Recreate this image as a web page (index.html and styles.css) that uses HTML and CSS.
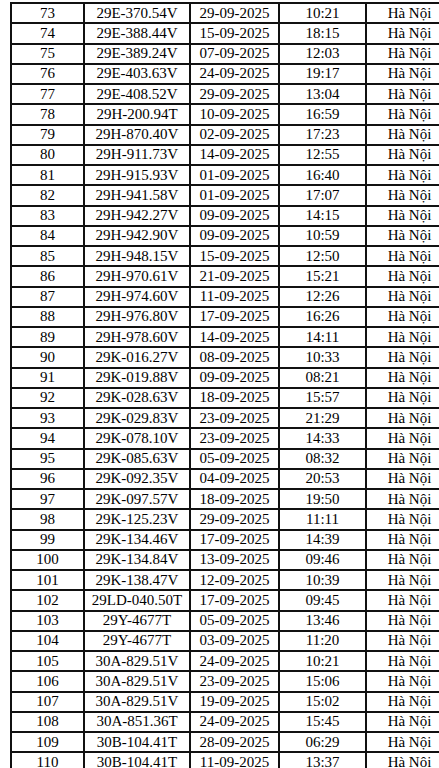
FILE: index.html
```html
<!DOCTYPE html>
<html lang="vi">
<head>
<meta charset="utf-8">
<title>Danh sách</title>
<link rel="stylesheet" href="styles.css">
</head>
<body>
<div class="wrap">
<table class="list">
<colgroup>
<col class="c-no"><col class="c-plate"><col class="c-date"><col class="c-time"><col class="c-place">
</colgroup>
<tbody>
<tr><td>73</td><td>29E-370.54V</td><td>29-09-2025</td><td>10:21</td><td>Hà Nội</td></tr>
<tr><td>74</td><td>29E-388.44V</td><td>15-09-2025</td><td>18:15</td><td>Hà Nội</td></tr>
<tr><td>75</td><td>29E-389.24V</td><td>07-09-2025</td><td>12:03</td><td>Hà Nội</td></tr>
<tr><td>76</td><td>29E-403.63V</td><td>24-09-2025</td><td>19:17</td><td>Hà Nội</td></tr>
<tr><td>77</td><td>29E-408.52V</td><td>29-09-2025</td><td>13:04</td><td>Hà Nội</td></tr>
<tr><td>78</td><td>29H-200.94T</td><td>10-09-2025</td><td>16:59</td><td>Hà Nội</td></tr>
<tr><td>79</td><td>29H-870.40V</td><td>02-09-2025</td><td>17:23</td><td>Hà Nội</td></tr>
<tr><td>80</td><td>29H-911.73V</td><td>14-09-2025</td><td>12:55</td><td>Hà Nội</td></tr>
<tr><td>81</td><td>29H-915.93V</td><td>01-09-2025</td><td>16:40</td><td>Hà Nội</td></tr>
<tr><td>82</td><td>29H-941.58V</td><td>01-09-2025</td><td>17:07</td><td>Hà Nội</td></tr>
<tr><td>83</td><td>29H-942.27V</td><td>09-09-2025</td><td>14:15</td><td>Hà Nội</td></tr>
<tr><td>84</td><td>29H-942.90V</td><td>09-09-2025</td><td>10:59</td><td>Hà Nội</td></tr>
<tr><td>85</td><td>29H-948.15V</td><td>15-09-2025</td><td>12:50</td><td>Hà Nội</td></tr>
<tr><td>86</td><td>29H-970.61V</td><td>21-09-2025</td><td>15:21</td><td>Hà Nội</td></tr>
<tr><td>87</td><td>29H-974.60V</td><td>11-09-2025</td><td>12:26</td><td>Hà Nội</td></tr>
<tr><td>88</td><td>29H-976.80V</td><td>17-09-2025</td><td>16:26</td><td>Hà Nội</td></tr>
<tr><td>89</td><td>29H-978.60V</td><td>14-09-2025</td><td>14:11</td><td>Hà Nội</td></tr>
<tr><td>90</td><td>29K-016.27V</td><td>08-09-2025</td><td>10:33</td><td>Hà Nội</td></tr>
<tr><td>91</td><td>29K-019.88V</td><td>09-09-2025</td><td>08:21</td><td>Hà Nội</td></tr>
<tr><td>92</td><td>29K-028.63V</td><td>18-09-2025</td><td>15:57</td><td>Hà Nội</td></tr>
<tr><td>93</td><td>29K-029.83V</td><td>23-09-2025</td><td>21:29</td><td>Hà Nội</td></tr>
<tr><td>94</td><td>29K-078.10V</td><td>23-09-2025</td><td>14:33</td><td>Hà Nội</td></tr>
<tr><td>95</td><td>29K-085.63V</td><td>05-09-2025</td><td>08:32</td><td>Hà Nội</td></tr>
<tr><td>96</td><td>29K-092.35V</td><td>04-09-2025</td><td>20:53</td><td>Hà Nội</td></tr>
<tr><td>97</td><td>29K-097.57V</td><td>18-09-2025</td><td>19:50</td><td>Hà Nội</td></tr>
<tr><td>98</td><td>29K-125.23V</td><td>29-09-2025</td><td>11:11</td><td>Hà Nội</td></tr>
<tr><td>99</td><td>29K-134.46V</td><td>17-09-2025</td><td>14:39</td><td>Hà Nội</td></tr>
<tr><td>100</td><td>29K-134.84V</td><td>13-09-2025</td><td>09:46</td><td>Hà Nội</td></tr>
<tr><td>101</td><td>29K-138.47V</td><td>12-09-2025</td><td>10:39</td><td>Hà Nội</td></tr>
<tr><td>102</td><td>29LD-040.50T</td><td>17-09-2025</td><td>09:45</td><td>Hà Nội</td></tr>
<tr><td>103</td><td>29Y-4677T</td><td>05-09-2025</td><td>13:46</td><td>Hà Nội</td></tr>
<tr><td>104</td><td>29Y-4677T</td><td>03-09-2025</td><td>11:20</td><td>Hà Nội</td></tr>
<tr><td>105</td><td>30A-829.51V</td><td>24-09-2025</td><td>10:21</td><td>Hà Nội</td></tr>
<tr><td>106</td><td>30A-829.51V</td><td>23-09-2025</td><td>15:06</td><td>Hà Nội</td></tr>
<tr><td>107</td><td>30A-829.51V</td><td>19-09-2025</td><td>15:02</td><td>Hà Nội</td></tr>
<tr><td>108</td><td>30A-851.36T</td><td>24-09-2025</td><td>15:45</td><td>Hà Nội</td></tr>
<tr><td>109</td><td>30B-104.41T</td><td>28-09-2025</td><td>06:29</td><td>Hà Nội</td></tr>
<tr><td>110</td><td>30B-104.41T</td><td>11-09-2025</td><td>13:37</td><td>Hà Nội</td></tr>
</tbody>
</table>
</div>
</body>
</html>
```
FILE: styles.css
```css
html, body {
  margin: 0;
  padding: 0;
  background: #fff;
  overflow: hidden;
}

.wrap {
  width: 439px;
  height: 768px;
  overflow: hidden;
  padding: 2px 0 0 10px;
  box-sizing: border-box;
}

.list {
  table-layout: fixed;
  border-collapse: separate;
  border-spacing: 0;
  width: 444px;
  border-top: 2px solid #111;
  border-left: 2px solid #111;
  font-family: "Liberation Serif", "Times New Roman", serif;
  font-size: 15px;
  color: #000;
}

.c-no { width: 73px; }
.c-plate { width: 106px; }
.c-date { width: 89px; }
.c-time { width: 87px; }
.c-place { width: 87px; }

.list tr {
  height: 20.25px;
}

.list td {
  box-sizing: border-box;
  border-right: 2px solid #111;
  border-bottom: 2px solid #111;
  padding: 0;
  text-align: center;
  vertical-align: middle;
  line-height: 17px;
  white-space: nowrap;
}
```
